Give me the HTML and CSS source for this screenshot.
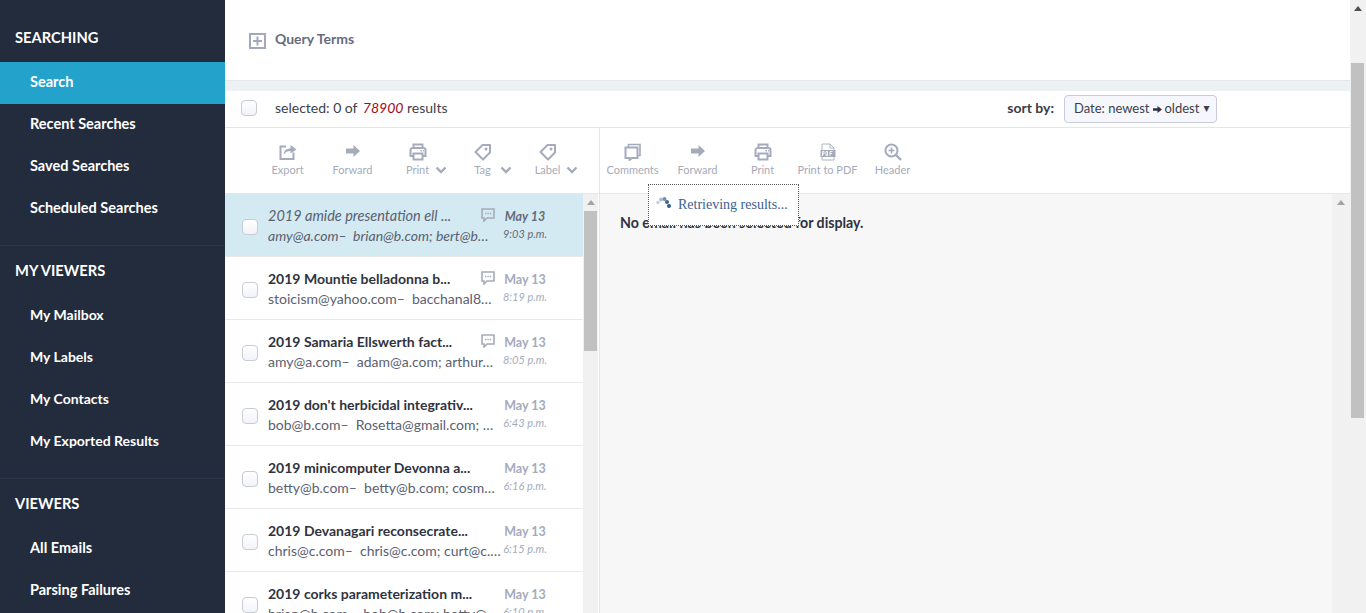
FILE: index.html
```html
<!DOCTYPE html>
<html lang="en">
<head>
<meta charset="utf-8">
<title>Search</title>
<link rel="stylesheet" href="styles.css">
</head>
<body>
<svg class="defs" width="0" height="0" aria-hidden="true">
  <symbol id="i-forward" viewBox="0 0 16 16"><path d="M1 4.500h7.500V1l6.500 6-6.500 6V9.500H1z" fill="currentColor"/></symbol>
  <symbol id="i-print" viewBox="0 0 18 18"><path d="M4.500 5V1.500h9V5M4.500 13H1.500V7a2 2 0 0 1 2-2h11a2 2 0 0 1 2 2v6h-3M4.500 10.500h9v6h-9z" fill="none" stroke="currentColor" stroke-width="2"/><path d="M11.500 7.800h1.500M14 7.800h1" stroke="currentColor" stroke-width="1.500"/></symbol>
  <symbol id="i-tag" viewBox="0 0 18 18"><path d="M1.500 9 8.500 2h7.500v7.500L9 16.500z" fill="none" stroke="currentColor" stroke-width="2" stroke-linejoin="round"/><circle cx="12" cy="6" r="1.500" fill="currentColor"/></symbol>
  <symbol id="i-chevron" viewBox="0 0 12 8"><path d="M1.500 1.500 6 6l4.500-4.500" fill="none" stroke="currentColor" stroke-width="2.400"/></symbol>
  <symbol id="i-bubble" viewBox="0 0 14 14"><path d="M1 1h12v9H6l-3 3v-3H1z" fill="none" stroke="currentColor" stroke-width="1.600"/><path d="M4 5.500h1.400M6.400 5.500h1.400M8.800 5.500h1.400" stroke="currentColor" stroke-width="1.500"/></symbol>
</svg>

<nav class="sidebar">
  <section class="nav-group">
    <h2 class="nav-head">SEARCHING</h2>
    <a class="nav-item active">Search</a>
    <a class="nav-item">Recent Searches</a>
    <a class="nav-item">Saved Searches</a>
    <a class="nav-item">Scheduled Searches</a>
  </section>
  <section class="nav-group nav-group-my">
    <h2 class="nav-head">MY VIEWERS</h2>
    <a class="nav-item">My Mailbox</a>
    <a class="nav-item">My Labels</a>
    <a class="nav-item">My Contacts</a>
    <a class="nav-item">My Exported Results</a>
  </section>
  <section class="nav-group">
    <h2 class="nav-head">VIEWERS</h2>
    <a class="nav-item">All Emails</a>
    <a class="nav-item">Parsing Failures</a>
  </section>
</nav>

<main class="main">
  <div class="query">
    <svg class="query-icon" width="17" height="16" viewBox="0 0 17 16"><path d="M1 1h15v14H1zM8.500 3.500v9M4 8h9" fill="none" stroke="currentColor" stroke-width="2"/></svg>
    <span class="query-label">Query Terms</span>
  </div>
  <div class="band"></div>
  <div class="selbar">
    <span class="check check-sel"></span>
    <span class="sel-text">selected: 0 of <em class="count">78900</em> results</span>
    <span class="sort-label">sort by:</span>
    <span class="sort-select">Date: newest <svg class="sort-arrow" width="9" height="7" viewBox="0 0 9 7"><path d="M0 2.200h4.500V0L9 3.500 4.500 7V4.800H0z" fill="currentColor"/></svg> oldest <span class="caret">▾</span></span>
  </div>
  <div class="toolbar">
    <div class="tools tools-left">
      <div class="tool"><svg class="ti" width="18" height="17" viewBox="0 0 18 17"><path d="M7 3H1.500v12.500h13V9" fill="none" stroke="currentColor" stroke-width="2"/><path d="M4.500 11c.5-4 3-6 7-6V1.500L17.500 6 11.500 10V7.500c-3 0-5 1-7 3.500z" fill="currentColor"/></svg><span>Export</span></div>
      <div class="tool"><svg class="ti" width="16" height="16"><use href="#i-forward"/></svg><span>Forward</span></div>
      <div class="tool"><svg class="ti" width="18" height="18"><use href="#i-print"/></svg><span class="has-chev">Print<svg class="chev" width="12" height="8"><use href="#i-chevron"/></svg></span></div>
      <div class="tool"><svg class="ti" width="18" height="18"><use href="#i-tag"/></svg><span class="has-chev">Tag<svg class="chev chev-wide" width="12" height="8"><use href="#i-chevron"/></svg></span></div>
      <div class="tool"><svg class="ti" width="18" height="18"><use href="#i-tag"/></svg><span class="has-chev">Label<svg class="chev" width="12" height="8"><use href="#i-chevron"/></svg></span></div>
    </div>
    <div class="tools">
      <div class="tool"><svg class="ti" width="17" height="17" viewBox="0 0 17 17"><path d="M4.500 3.500V1h11.500v11h-2.500" fill="none" stroke="currentColor" stroke-width="1.600"/><path d="M1.500 4h12v10.500H8L5.500 16.500v-2h-4z" fill="none" stroke="currentColor" stroke-width="2"/></svg><span>Comments</span></div>
      <div class="tool"><svg class="ti" width="16" height="16"><use href="#i-forward"/></svg><span>Forward</span></div>
      <div class="tool"><svg class="ti" width="18" height="18"><use href="#i-print"/></svg><span>Print</span></div>
      <div class="tool"><svg class="ti" width="16" height="18" viewBox="0 0 16 18"><path d="M2 7V1h8l4 4v2M2 14v3h12v-3M10 1v4h4" fill="none" stroke="currentColor" stroke-width=".9"/><rect x=".5" y="7" width="15" height="7" fill="currentColor"/><path d="M2.500 13V8.500h1.500v2.500h-1.500M6 8.500v4h1.500v-4zM10 13V8.500h2.500M10 10.500h2" fill="none" stroke="#fff" stroke-width=".9"/></svg><span>Print to PDF</span></div>
      <div class="tool"><svg class="ti" width="18" height="18" viewBox="0 0 18 18"><circle cx="7.500" cy="7.500" r="6" fill="none" stroke="currentColor" stroke-width="2"/><path d="m12 12 5 5" stroke="currentColor" stroke-width="2.400"/><path d="M7.500 4.500v6M4.500 7.500h6" stroke="currentColor" stroke-width="1.600"/></svg><span>Header</span></div>
    </div>
  </div>
  <div class="panes">
    <div class="list-pane">
      <div class="list">
        <article class="row row-current">
          <span class="check"></span>
          <div class="row-body"><div class="subject">2019 amide presentation ell ...</div><div class="people">amy@a.com– &nbsp;brian@b.com; bert@b…</div></div>
          <svg class="bubble" width="14" height="14"><use href="#i-bubble"/></svg>
          <div class="when"><div class="date">May 13</div><div class="time">9:03 p.m.</div></div>
        </article>
        <article class="row">
          <span class="check"></span>
          <div class="row-body"><div class="subject">2019 Mountie belladonna b...</div><div class="people">stoicism@yahoo.com– &nbsp;bacchanal8…</div></div>
          <svg class="bubble" width="14" height="14"><use href="#i-bubble"/></svg>
          <div class="when"><div class="date">May 13</div><div class="time">8:19 p.m.</div></div>
        </article>
        <article class="row">
          <span class="check"></span>
          <div class="row-body"><div class="subject">2019 Samaria Ellswerth fact...</div><div class="people">amy@a.com– &nbsp;adam@a.com; arthur…</div></div>
          <svg class="bubble" width="14" height="14"><use href="#i-bubble"/></svg>
          <div class="when"><div class="date">May 13</div><div class="time">8:05 p.m.</div></div>
        </article>
        <article class="row">
          <span class="check"></span>
          <div class="row-body"><div class="subject">2019 don't herbicidal integrativ...</div><div class="people">bob@b.com– &nbsp;Rosetta@gmail.com; …</div></div>
          <div class="when"><div class="date">May 13</div><div class="time">6:43 p.m.</div></div>
        </article>
        <article class="row">
          <span class="check"></span>
          <div class="row-body"><div class="subject">2019 minicomputer Devonna a...</div><div class="people">betty@b.com– &nbsp;betty@b.com; cosm…</div></div>
          <div class="when"><div class="date">May 13</div><div class="time">6:16 p.m.</div></div>
        </article>
        <article class="row">
          <span class="check"></span>
          <div class="row-body"><div class="subject">2019 Devanagari reconsecrate...</div><div class="people">chris@c.com– &nbsp;chris@c.com; curt@c.…</div></div>
          <div class="when"><div class="date">May 13</div><div class="time">6:15 p.m.</div></div>
        </article>
        <article class="row">
          <span class="check"></span>
          <div class="row-body"><div class="subject">2019 corks parameterization m...</div><div class="people">brian@b.com– &nbsp;bob@b.com; betty@…</div></div>
          <div class="when"><div class="date">May 13</div><div class="time">6:10 p.m.</div></div>
        </article>
      </div>
      <div class="scroll scroll-list"><span class="arrow arrow-soft"></span><span class="thumb thumb-list"></span></div>
    </div>
    <div class="detail">
      <p class="empty">No email has been selected for display.</p>
      <div class="scroll scroll-detail"><span class="arrow arrow-soft"></span></div>
    </div>
  </div>
  <div class="retrieving">
    <svg class="spinner" width="16" height="12" viewBox="0 0 16 12"><circle cx="2" cy="5.500" r="1.800" fill="#c4d3e3"/><circle cx="5" cy="2.500" r="2" fill="#a9bdd4"/><circle cx="8.500" cy="2" r="2" fill="#7190b5"/><circle cx="11" cy="5" r="2" fill="#3e658f"/><circle cx="13" cy="9" r="2" fill="#2f5a8a"/></svg>
    <span>Retrieving results...</span>
  </div>
</main>
<div class="scroll scroll-page"><span class="arrow"></span><span class="thumb thumb-page"></span></div>
</body>
</html>
```
FILE: styles.css
```css
* { box-sizing: border-box; }
html, body { height: 100%; margin: 0; overflow: hidden; }
body {
  display: flex;
  font-family: Lato, "Open Sans", sans-serif;
  font-size: 14px;
  color: #2f3340;
  background: #fff;
}
.defs { position: absolute; }

/* sidebar */
.sidebar { width: 225px; flex: none; height: 613px; background: #232c3d; color: #fff; overflow: hidden; }
.nav-group { border-bottom: 1px solid #2b3547; padding-bottom: 15px; }
.nav-head { margin: 0; height: 62px; padding: 28px 0 0 15px; font-size: 14.700px; line-height: 18px; font-weight: 700; }
.nav-group + .nav-group .nav-head { height: 49px; padding-top: 15px; }
.nav-item { display: block; height: 42px; line-height: 40px; padding-left: 30px; font-weight: 700; font-size: 14.500px; }
.nav-group-my .nav-item { font-size: 14px; }
.nav-item.active { background: #23a3cc; }

/* main */
.main { position: relative; flex: 1; min-width: 0; height: 613px; display: flex; flex-direction: column; }
.query { height: 80px; flex: none; display: flex; align-items: center; padding-left: 24px; }
.query-icon { color: #a3a9ba; margin: 2px 9px 0 0; }
.query-label { font-weight: 700; font-size: 14px; color: #656c7e; margin-top: -4px; }
.band { height: 11px; flex: none; background: #eef1f4; border-top: 1px solid #e4e6ea; }
.selbar { height: 37px; flex: none; display: flex; align-items: flex-start; padding: 0 133px 0 16px; border-bottom: 1px solid #e6e6ea; }
.check-sel { margin-top: 9px; }
.sel-text { margin: 8px 0 0 18px; font-size: 14px; line-height: 18px; color: #3c3f4b; }
.count { color: #a5091a; margin-left: 2px; }
.sort-label { margin: 8px 0 0 auto; font-weight: 700; font-size: 14px; line-height: 18px; color: #3a3d49; }
.sort-select { margin: 4px 0 0 10px; height: 28px; width: 153px; padding: 0 0 2px 9px; display: flex; align-items: center; gap: 3px; background: #f5f7fc; border: 1px solid #c9cbdc; border-radius: 4px; font-size: 13px; color: #3c3f4b; white-space: nowrap; }
.sort-arrow { color: #2f3340; margin-top: 2px; }
.caret { margin-left: 1px; font-size: 12px; font-family: "DejaVu Sans", sans-serif; }
.check { display: block; flex: none; width: 16px; height: 16px; background: linear-gradient(#fff, #f2f3f9); border: 1px solid #c9cbd6; border-radius: 4px; }

/* toolbar */
.toolbar { height: 66px; flex: none; display: flex; border-bottom: 1px solid #e6e6ea; }
.tools { display: flex; padding-top: 15px; }
.tools-left { width: 375px; padding-left: 30px; border-right: 1px solid #e6e6ea; }
.tool { width: 65px; display: flex; flex-direction: column; align-items: center; color: #a5abbb; font-size: 11px; white-space: nowrap; }
.ti { display: block; height: 18px; margin-bottom: 2px; }
.tool span { line-height: 14px; }
.has-chev { position: relative; }
.chev { position: absolute; left: 100%; top: 3px; margin-left: 6px; }
.chev-wide { margin-left: 9px; }

/* panes */
.panes { flex: 1; min-height: 0; display: flex; }
.list-pane { width: 375px; flex: none; display: flex; border-right: 1px solid #e6e6ea; padding-right: 2px; }
.list { width: 358px; flex: none; overflow: hidden; }
.row { height: 63px; display: flex; border-bottom: 1px solid #e6e8ec; padding-left: 17px; position: relative; }
.row > .check { margin-top: 25px; }
.row-body { width: 231px; margin-left: 10px; padding-top: 13px; min-width: 0; }
.subject { font-weight: 700; font-size: 14px; line-height: 18px; color: #2f3340; white-space: nowrap; }
.people { margin-top: 2px; font-size: 14px; line-height: 18px; color: #5b6070; white-space: nowrap; }
.bubble { position: absolute; left: 256px; top: 14px; color: #a5abbb; }
.when { position: absolute; left: 276px; top: 14px; width: 48px; text-align: center; color: #a5abbb; }
.date { font-size: 12.500px; line-height: 18px; font-weight: 700; }
.time { font-size: 11px; line-height: 16px; font-style: italic; }
.row-current { background: #d3eaf2; }
.row-current .subject { font-weight: 400; font-style: italic; font-size: 14.500px; color: #5b6070; }
.row-current .people { font-style: italic; }
.row-current .date, .row-current .time { color: #666b7a; font-style: italic; }

.detail { flex: 1; min-width: 0; display: flex; justify-content: space-between; background: #f7f7f7; }
.empty { margin: 20px 0 0 20px; font-weight: 700; font-size: 14.200px; line-height: 18px; color: #2f3340; }

/* scrollbars */
.scroll { display: block; flex: none; background: #f1f1f1; }
.scroll-list { width: 15px; }
.scroll-detail { width: 18px; }
.scroll-page { width: 16px; height: 613px; }
.arrow { display: block; width: 0; height: 0; margin: 6px auto 0; border: 4px solid transparent; border-top: 0; border-bottom: 5px solid #505050; }
.arrow-soft { border-bottom-color: #a3a3a3; }
.thumb { display: block; background: #c1c1c1; }
.thumb-list { margin: 6px 0 0 1px; height: 140px; width: 13px; }
.thumb-page { margin: 52px 0 0 1px; height: 355px; width: 13px; }

/* overlay */
.retrieving { position: absolute; left: 423px; top: 184px; width: 151px; height: 42px; background: #fff; border: 1px dotted #555; display: flex; align-items: flex-start; padding: 10px 0 0 7px; font-family: "Liberation Serif", serif; font-size: 14px; line-height: 18px; color: #3a6190; }
.retrieving span { margin-top: 1px; margin-left: -1px; }
.spinner { margin: 2px 7px 0 0; flex: none; }
```
